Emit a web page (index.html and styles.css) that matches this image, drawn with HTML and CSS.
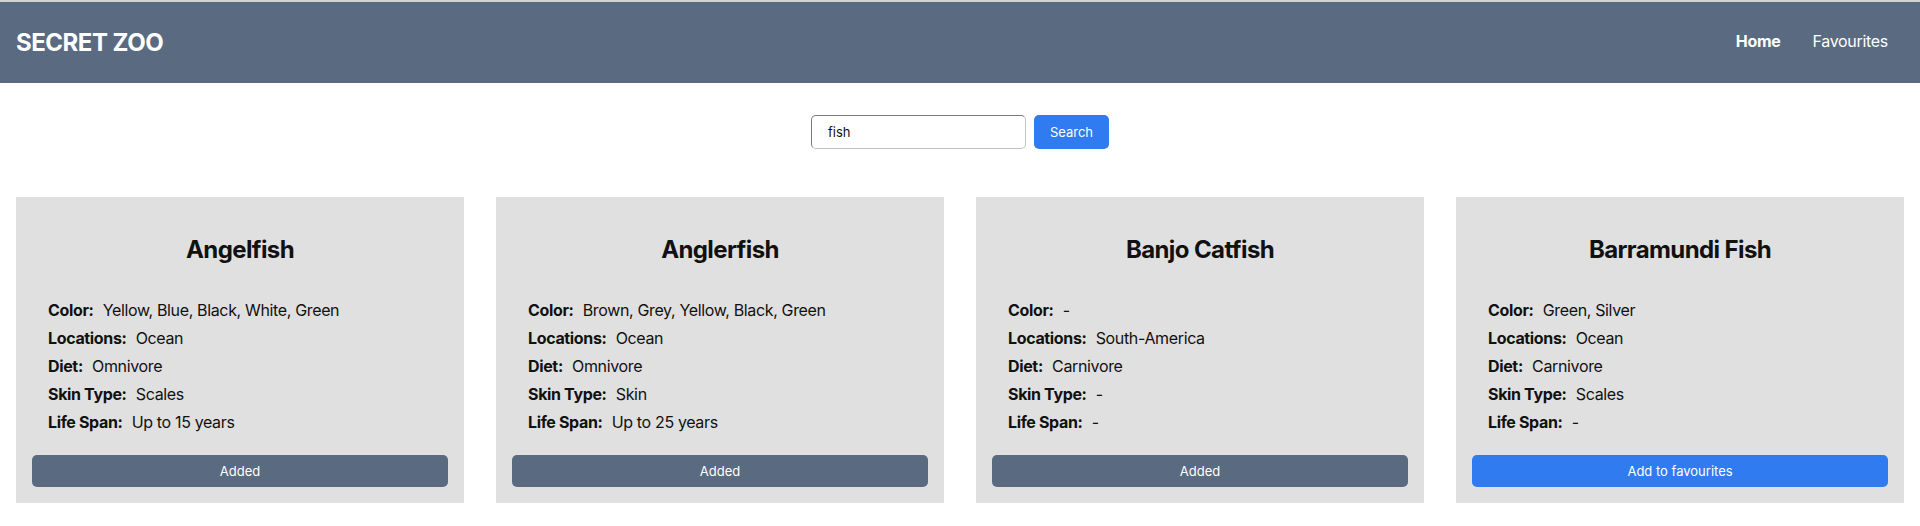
FILE: index.html
```html
<!DOCTYPE html>
<html>
<head>
<meta charset="utf-8">
<link rel="stylesheet" href="styles.css">
</head>
<body>
<header class="topbar">
  <div class="brand">SECRET ZOO</div>
  <nav class="nav">
    <a class="nav-link active">Home</a>
    <a class="nav-link">Favourites</a>
  </nav>
</header>
<section class="search">
  <input class="search-input" type="text" value="fish">
  <button class="search-btn">Search</button>
</section>
<main class="cards">
  <article class="card">
    <h2 class="card-title">Angelfish</h2>
    <ul class="facts">
      <li><b>Color:</b> Yellow, Blue, Black, White, Green</li>
      <li><b>Locations:</b> Ocean</li>
      <li><b>Diet:</b> Omnivore</li>
      <li><b>Skin Type:</b> Scales</li>
      <li><b>Life Span:</b> Up to 15 years</li>
    </ul>
    <button class="card-btn added">Added</button>
  </article>
  <article class="card">
    <h2 class="card-title">Anglerfish</h2>
    <ul class="facts">
      <li><b>Color:</b> Brown, Grey, Yellow, Black, Green</li>
      <li><b>Locations:</b> Ocean</li>
      <li><b>Diet:</b> Omnivore</li>
      <li><b>Skin Type:</b> Skin</li>
      <li><b>Life Span:</b> Up to 25 years</li>
    </ul>
    <button class="card-btn added">Added</button>
  </article>
  <article class="card">
    <h2 class="card-title">Banjo Catfish</h2>
    <ul class="facts">
      <li><b>Color:</b> -</li>
      <li><b>Locations:</b> South-America</li>
      <li><b>Diet:</b> Carnivore</li>
      <li><b>Skin Type:</b> -</li>
      <li><b>Life Span:</b> -</li>
    </ul>
    <button class="card-btn added">Added</button>
  </article>
  <article class="card">
    <h2 class="card-title">Barramundi Fish</h2>
    <ul class="facts">
      <li><b>Color:</b> Green, Silver</li>
      <li><b>Locations:</b> Ocean</li>
      <li><b>Diet:</b> Carnivore</li>
      <li><b>Skin Type:</b> Scales</li>
      <li><b>Life Span:</b> -</li>
    </ul>
    <button class="card-btn add">Add to favourites</button>
  </article>
</main>
</body>
</html>
```
FILE: styles.css
```css
* { box-sizing: border-box; }
html, body { margin: 0; padding: 0; background: #fff; }
body {
  font-family: Inter, "Noto Sans", "Liberation Sans", sans-serif;
  color: #111;
}
.topbar {
  border-top: 2px solid #d2d2d2;
  background: #5a6a80;
  height: 83px;
  display: flex;
  align-items: center;
  justify-content: space-between;
  padding: 0 16px 0 16px;
}
.brand {
  color: #fff;
  font-size: 24px;
  font-weight: 700;
  letter-spacing: -0.5px;
}
.nav {
  display: flex;
  gap: 32px;
  padding-right: 16px;
  margin-top: -4px;
}
.nav-link {
  color: #fff;
  font-size: 16px;
  letter-spacing: -0.3px;
  text-decoration: none;
}
.nav-link.active { font-weight: 700; }
.search {
  display: flex;
  justify-content: center;
  gap: 8px;
  margin-top: 32px;
}
.search-input {
  width: 215px;
  height: 34px;
  border: 1px solid #bfc3ca;
  border-top-color: #7a7a7a;
  border-left-color: #7a7a7a;
  border-radius: 5px;
  padding: 0 16px;
  font-family: inherit;
  font-size: 13px;
  color: #111;
  background: #fff;
}
.search-btn {
  width: 75px;
  height: 34px;
  border: none;
  border-radius: 5px;
  background: #2f7bef;
  color: #fff;
  font-family: inherit;
  font-size: 13px;
}
.cards {
  display: grid;
  grid-template-columns: repeat(4, 448px);
  gap: 32px;
  padding: 0 16px;
  margin-top: 48px;
}
.card {
  background: #e0e0e0;
  height: 306px;
  padding: 16px;
  display: flex;
  flex-direction: column;
}
.card-title {
  margin: 22px 0 0 0;
  text-align: center;
  font-size: 24px;
  font-weight: 700;
  line-height: 30px;
  letter-spacing: -0.6px;
}
.facts {
  list-style: none;
  margin: 31px 0 0 0;
  padding: 0 16px;
  font-size: 16px;
  line-height: 28px;
  letter-spacing: -0.35px;
}
.facts b { font-weight: 700; margin-right: 5px; }
.card-btn {
  margin-top: auto;
  height: 32px;
  width: 100%;
  border: none;
  border-radius: 5px;
  color: #fff;
  font-family: inherit;
  font-size: 13px;
}
.card-btn.added { background: #5a6a80; }
.card-btn.add { background: #2f7bef; }
```
